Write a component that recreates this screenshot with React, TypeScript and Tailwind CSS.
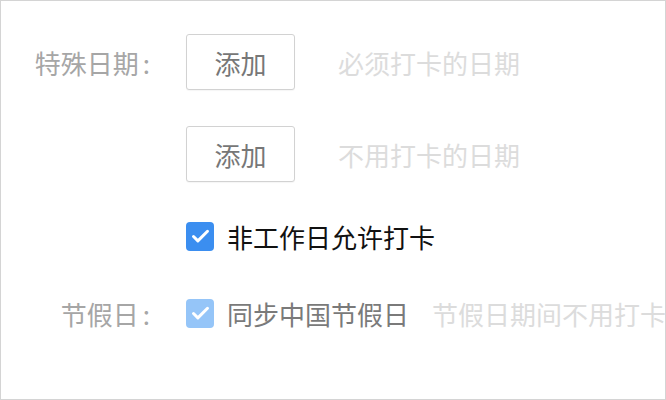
import { Check } from "lucide-react"

const font = { fontFamily: '"Noto Sans CJK SC", "Noto Sans", sans-serif' }

function Label({ text }: { text?: string }) {
  return (
    <div className="w-[150px] shrink-0 flex justify-end pr-[1px] text-[26px] text-[#a6a6a6]">
      {text && (
        <>
          <span>{text}</span>
          <span className="ml-[4px]">:</span>
        </>
      )}
    </div>
  )
}

function AddButton() {
  return (
    <button className="w-[109px] h-[56px] rounded-[3px] border border-[#d2d2d2] bg-white text-[26px] text-[#777] shadow-[0_1px_1px_rgba(0,0,0,0.04)]">
      添加
    </button>
  )
}

function Box({ light }: { light?: boolean }) {
  return (
    <span
      className={
        "w-[28px] h-[29px] rounded-[4px] flex items-center justify-center " +
        (light ? "bg-[#95c5f8]" : "bg-[#3b8ef0]")
      }
    >
      <Check className="w-[21px] h-[21px] text-white" strokeWidth={3.4} />
    </span>
  )
}

export default function App() {
  return (
    <div
      className="w-[666px] h-[400px] overflow-hidden border border-[#d4d4d4] bg-white pt-[33px]"
      style={font}
    >
      <div className="flex items-center gap-[35px]">
        <Label text="特殊日期" />
        <AddButton />
        <span className="ml-[8px] text-[26px] text-[#dcdcdc]">必须打卡的日期</span>
      </div>

      <div className="flex items-center gap-[35px] mt-[36px]">
        <Label />
        <AddButton />
        <span className="ml-[8px] text-[26px] text-[#dcdcdc]">不用打卡的日期</span>
      </div>

      <div className="flex items-center gap-[35px] mt-[35px]">
        <Label />
        <label className="flex items-center gap-[13px]">
          <Box />
          <span className="text-[26px] text-[#111]">非工作日允许打卡</span>
        </label>
      </div>

      <div className="flex items-center gap-[35px] mt-[38px]">
        <Label text="节假日" />
        <label className="flex items-center gap-[13px] whitespace-nowrap">
          <Box light />
          <span className="text-[26px] text-[#7a7a7a]">同步中国节假日</span>
          <span className="ml-[10px] text-[26px] text-[#dcdcdc]">节假日期间不用打卡</span>
        </label>
      </div>
    </div>
  )
}
